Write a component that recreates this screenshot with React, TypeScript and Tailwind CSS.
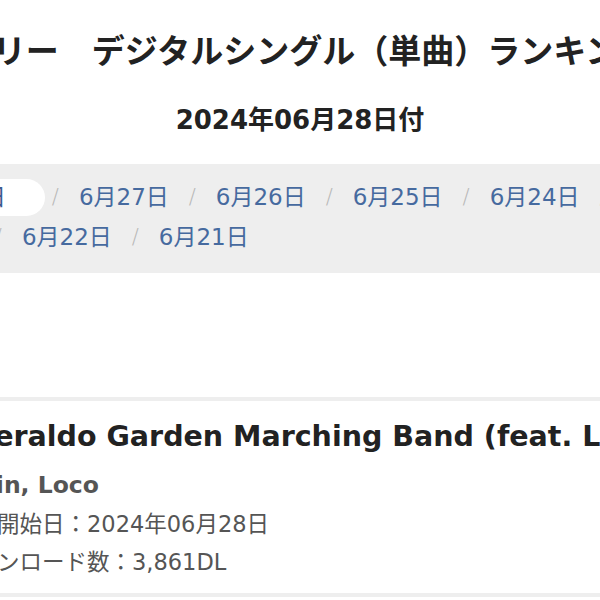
import React from 'react';

// Dates shown in the daily nav; the first one is the active date
const dates = ['6月28日', '6月27日', '6月26日', '6月25日', '6月24日', '6月23日', '6月22日', '6月21日'];

const boldFont = "font-['DejaVu_Sans','Noto_Sans_CJK_JP',sans-serif]";

function DateNav() {
  return (
    <nav className="mt-[26px] bg-[#eeeeee] pt-[13px] pb-[16px] pl-[72px]">
      <ul className={`flex w-[825px] flex-wrap ${boldFont} text-[23px] leading-[40px] text-[#466a9f]`}>
        {dates.map((d, i) => (
          <li key={d} className="flex items-center">
            {i === 0 ? (
              <span className="flex h-[37px] items-center rounded-full bg-white pl-[44px] pr-[39px] text-[#3b5c8f]">
                {d}
              </span>
            ) : (
              <a href="#" className="px-[13px]">
                {d}
              </a>
            )}
            {i < dates.length - 1 && (
              <span className="w-[21px] text-center text-[21px] font-light text-[#b8b8b8]">/</span>
            )}
          </li>
        ))}
      </ul>
    </nav>
  );
}

function RankingCard() {
  return (
    <article className="mt-[124px] border-y-4 border-[#eeeeee] pl-[156px] pt-[16px] pb-[15px]">
      <h3 className={`${boldFont} -ml-[11px] whitespace-nowrap text-[28.5px] font-bold leading-[40px] text-[#222222]`}>
        Emeraldo Garden Marching Band (feat. Loco)
      </h3>
      <p className={`${boldFont} mt-[11px] -ml-[11px] whitespace-nowrap text-[23.5px] font-bold leading-[34px] text-[#555555]`}>
        Marin, Loco
      </p>
      <dl className={`${boldFont} mt-[6px] -ml-[4px] text-[22.5px] leading-[32px] text-[#555555]`}>
        <div className="flex">
          <dt>配信開始日：</dt>
          <dd>2024年06月28日</dd>
        </div>
        <div className="mt-[6px] flex">
          <dt>ダウンロード数：</dt>
          <dd>3,861DL</dd>
        </div>
      </dl>
    </article>
  );
}

export default function App() {
  return (
    <main className="h-[600px] w-[600px] overflow-hidden bg-white">
      <div className="ml-[-200px] w-[1000px]">
        {/* Heading */}
        <h1 className={`${boldFont} pt-[32px] pr-[22px] text-center text-[33px] font-bold leading-[40px] whitespace-nowrap text-[#222222]`}>
          デイリー　デジタルシングル（単曲）ランキング
        </h1>
        <h2 className={`${boldFont} mt-[30px] text-center text-[26px] font-bold leading-[36px] text-[#222222]`}>
          2024年06月28日付
        </h2>

        {/* Date navigation */}
        <DateNav />

        {/* Ranking entry */}
        <RankingCard />
      </div>
    </main>
  );
}
